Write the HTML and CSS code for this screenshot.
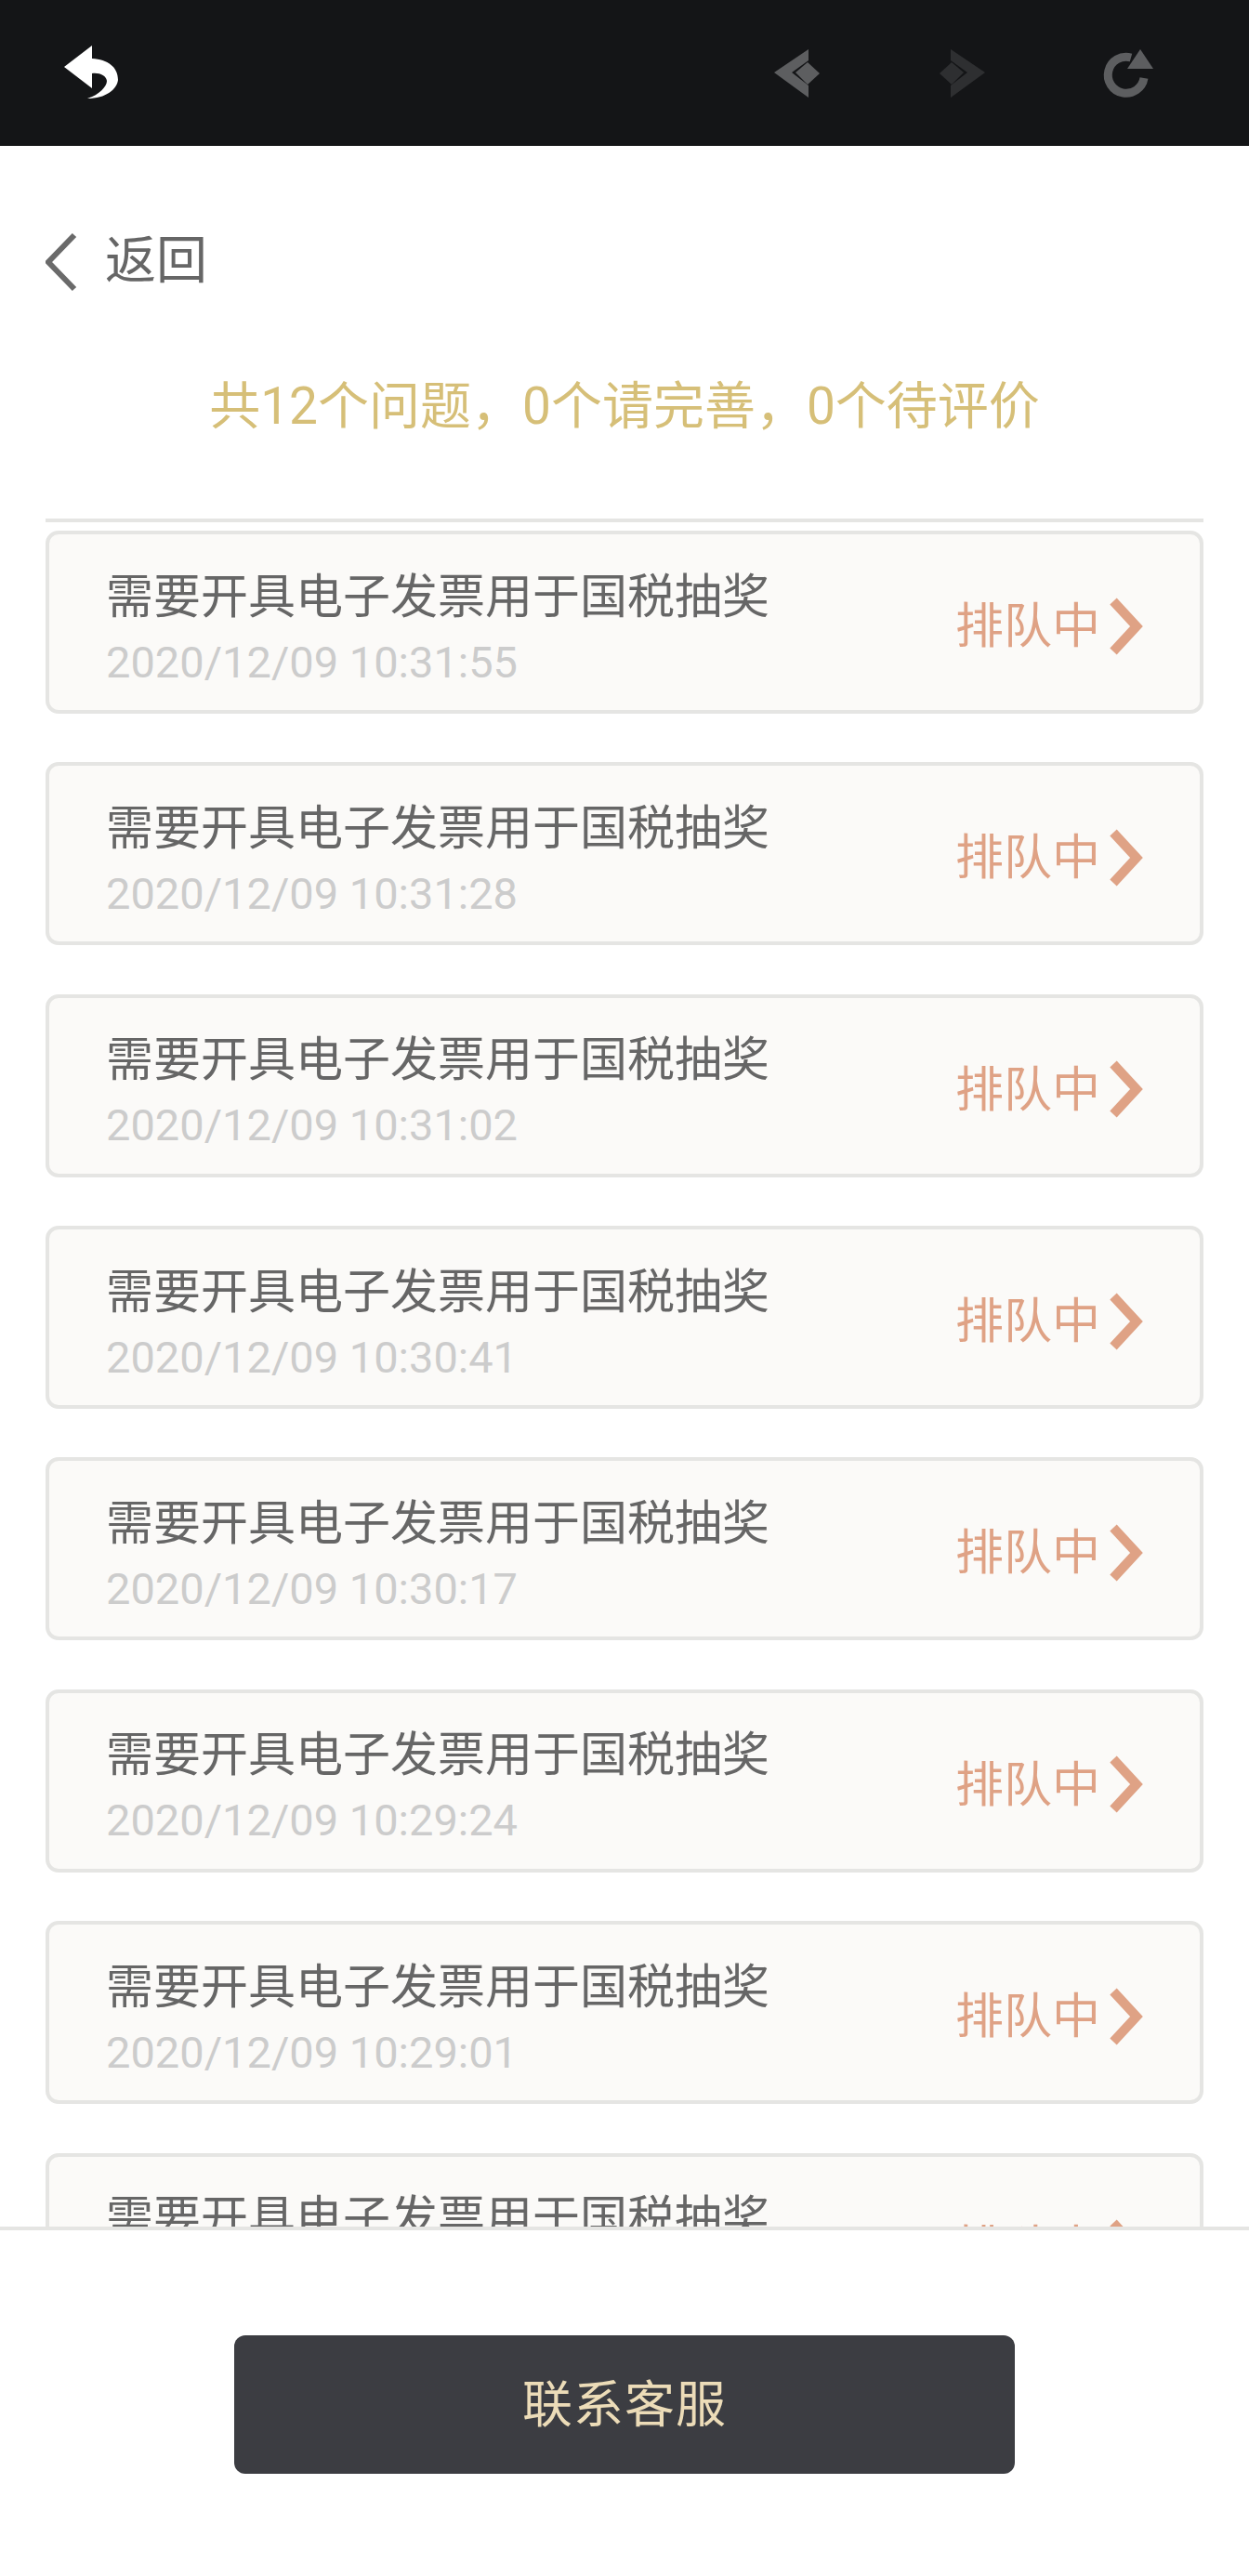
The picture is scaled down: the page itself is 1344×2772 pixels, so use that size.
FILE: index.html
```html
<!DOCTYPE html>
<html lang="zh-CN">
<head>
  <meta charset="UTF-8" />
  <meta name="viewport" content="width=device-width, initial-scale=1.0" />
  <title>问题列表</title>
  <link rel="stylesheet" href="styles.css">
</head>
<body>

<!-- Browser toolbar -->
<header class="toolbar">
  <svg class="tool-icon" viewBox="0 0 80 80">
    <path class="ic-white" d="M9 32 L39 9 L39 23 C56 24 67 32 67 46 C66 56 54 66 34 66 C47 62 55 53 55 47 C54 41 47 38 39 39 L39 55 Z"/>
  </svg>
  <div class="tool-group">
    <svg class="tool-icon" viewBox="0 0 80 80">
      <path class="ic-grey" d="M13 38 L50 13 L50 25 L32 38 L50 52 L50 65 Z"/>
      <path class="ic-grey" d="M36 38 L49 27 L62 39 L49 51 Z"/>
    </svg>
    <svg class="tool-icon" viewBox="0 0 80 80">
      <path class="ic-dark" d="M65 38 L28 13 L28 25 L46 38 L28 52 L28 65 Z"/>
      <path class="ic-dark" d="M42 38 L29 27 L16 39 L29 51 Z"/>
    </svg>
    <svg class="tool-icon" viewBox="0 0 80 80">
      <path class="ic-ring" d="M61 44 A19.5 19.5 0 1 1 47 22"/>
      <path class="ic-grey" d="M57 13 L71 34 L43 34 Z"/>
    </svg>
  </div>
</header>

<main class="page">
  <div class="back-row">
    <svg class="back-chevron" viewBox="0 0 34 64">
      <polyline points="31,3 3,32 31,61"/>
    </svg>
    <span class="back-text">返回</span>
  </div>

  <p class="summary">共12个问题，0个请完善，0个待评价</p>

  <div class="list">
    <div class="card">
      <div class="card-text">
        <div class="card-title">需要开具电子发票用于国税抽奖</div>
        <div class="card-time">2020/12/09 10:31:55</div>
      </div>
      <div class="card-status">
        <span class="status-label">排队中</span>
        <svg class="status-chevron" viewBox="0 0 36 62"><polyline points="4,4 29,31 4,58"/></svg>
      </div>
    </div>
    <div class="card">
      <div class="card-text">
        <div class="card-title">需要开具电子发票用于国税抽奖</div>
        <div class="card-time">2020/12/09 10:31:28</div>
      </div>
      <div class="card-status">
        <span class="status-label">排队中</span>
        <svg class="status-chevron" viewBox="0 0 36 62"><polyline points="4,4 29,31 4,58"/></svg>
      </div>
    </div>
    <div class="card">
      <div class="card-text">
        <div class="card-title">需要开具电子发票用于国税抽奖</div>
        <div class="card-time">2020/12/09 10:31:02</div>
      </div>
      <div class="card-status">
        <span class="status-label">排队中</span>
        <svg class="status-chevron" viewBox="0 0 36 62"><polyline points="4,4 29,31 4,58"/></svg>
      </div>
    </div>
    <div class="card">
      <div class="card-text">
        <div class="card-title">需要开具电子发票用于国税抽奖</div>
        <div class="card-time">2020/12/09 10:30:41</div>
      </div>
      <div class="card-status">
        <span class="status-label">排队中</span>
        <svg class="status-chevron" viewBox="0 0 36 62"><polyline points="4,4 29,31 4,58"/></svg>
      </div>
    </div>
    <div class="card">
      <div class="card-text">
        <div class="card-title">需要开具电子发票用于国税抽奖</div>
        <div class="card-time">2020/12/09 10:30:17</div>
      </div>
      <div class="card-status">
        <span class="status-label">排队中</span>
        <svg class="status-chevron" viewBox="0 0 36 62"><polyline points="4,4 29,31 4,58"/></svg>
      </div>
    </div>
    <div class="card">
      <div class="card-text">
        <div class="card-title">需要开具电子发票用于国税抽奖</div>
        <div class="card-time">2020/12/09 10:29:24</div>
      </div>
      <div class="card-status">
        <span class="status-label">排队中</span>
        <svg class="status-chevron" viewBox="0 0 36 62"><polyline points="4,4 29,31 4,58"/></svg>
      </div>
    </div>
    <div class="card">
      <div class="card-text">
        <div class="card-title">需要开具电子发票用于国税抽奖</div>
        <div class="card-time">2020/12/09 10:29:01</div>
      </div>
      <div class="card-status">
        <span class="status-label">排队中</span>
        <svg class="status-chevron" viewBox="0 0 36 62"><polyline points="4,4 29,31 4,58"/></svg>
      </div>
    </div>
    <div class="card">
      <div class="card-text">
        <div class="card-title">需要开具电子发票用于国税抽奖</div>
        <div class="card-time">2020/12/09 10:28:40</div>
      </div>
      <div class="card-status">
        <span class="status-label">排队中</span>
        <svg class="status-chevron" viewBox="0 0 36 62"><polyline points="4,4 29,31 4,58"/></svg>
      </div>
    </div>
  </div>
</main>

<footer class="bottom-bar">
  <button class="contact-btn">联系客服</button>
</footer>

</body>
</html>
```
FILE: styles.css
```css
* {
  margin: 0;
  padding: 0;
  box-sizing: border-box;
}

html, body {
  height: 100%;
  overflow: hidden;
  background: #fff;
  font-family: Roboto, "Noto Sans CJK SC", sans-serif;
}

body {
  display: flex;
  flex-direction: column;
}

/* toolbar */
.toolbar {
  flex: none;
  height: 157px;
  padding: 40px 94px 0 60px;
  display: flex;
  justify-content: space-between;
  background: #141517;
}

.tool-group {
  display: flex;
  gap: 95px;
}

.tool-icon {
  display: block;
  width: 80px;
  height: 80px;
}

.ic-white { fill: #fff; }
.ic-grey { fill: #5d5e60; }
.ic-dark { fill: #2e2f31; }
.ic-ring {
  fill: none;
  stroke: #5d5e60;
  stroke-width: 9;
}

/* page body */
.page {
  flex: 1;
  min-height: 0;
  overflow: hidden;
  padding: 0 49px;
}

.back-row {
  height: 250px;
  display: flex;
  align-items: center;
  gap: 30px;
}

.back-chevron {
  width: 34px;
  height: 64px;
  fill: none;
  stroke: #6a6a6a;
  stroke-width: 6;
}

.back-text {
  padding-bottom: 3px;
  font-size: 55px;
  line-height: 1;
  color: #666;
}

.summary {
  height: 155px;
  border-bottom: 4px solid #e5e5e3;
  text-align: center;
  font-size: 55px;
  line-height: 60px;
  color: #d6bf78;
}

.list {
  padding-top: 9px;
  display: flex;
  flex-direction: column;
  gap: 52.36px;
}

.card {
  flex: none;
  height: 197px;
  padding: 0 61px;
  display: flex;
  justify-content: space-between;
  align-items: center;
  background: #fbfaf8;
  border: 4px solid #e5e5e3;
  border-radius: 14px;
}

.card-text {
  padding-top: 6px;
}

.card-title {
  font-size: 51px;
  line-height: 80px;
  color: #666;
}

.card-time {
  font-size: 47px;
  line-height: 60px;
  color: #ccc;
}

.card-status {
  padding-top: 8px;
  display: flex;
  align-items: center;
  gap: 10px;
  font-size: 52px;
  line-height: 62px;
  color: #dfa285;
}

.status-label {
  padding-top: 3px;
}

.status-chevron {
  width: 36px;
  height: 62px;
  fill: none;
  stroke: #dfa285;
  stroke-width: 10;
}

/* bottom bar */
.bottom-bar {
  flex: none;
  height: 376px;
  padding-top: 113px;
  display: flex;
  justify-content: center;
  align-items: flex-start;
  background: #fff;
  border-top: 4px solid #e5e5e3;
}

.contact-btn {
  width: 840px;
  height: 149px;
  padding-bottom: 8px;
  border: none;
  border-radius: 12px;
  background: #3c3d42;
  color: #ecdcb8;
  font-family: inherit;
  font-size: 54px;
  letter-spacing: 1px;
}
```
